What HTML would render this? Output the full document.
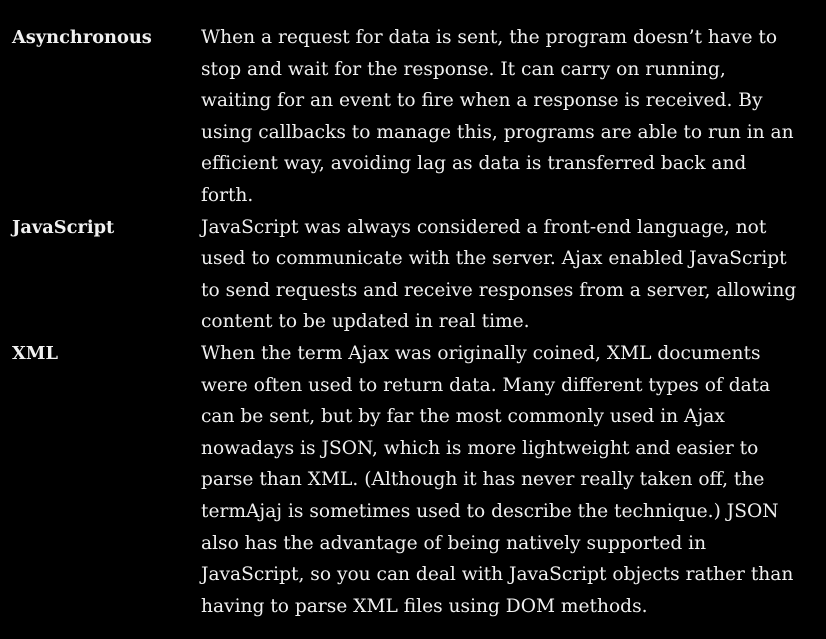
<!DOCTYPE html>
<html><head><meta charset="utf-8"><style>
html,body{margin:0;padding:0;background:#000;width:826px;height:639px;overflow:hidden}
body{font-family:"DejaVu Serif",serif;font-size:18.6px;line-height:31.6px;color:#f0f0f0}
.row{position:relative;white-space:nowrap}
.t{position:absolute;left:12px;top:0;font-weight:bold;font-size:17.8px}
.d{margin-left:201px}
.wrap{padding-top:22px}
</style></head><body><div class="wrap">
<div class="row"><div class="t">Asynchronous</div><div class="d">When a request for data is sent, the program doesn’t have to<br>stop and wait for the response. It can carry on running,<br>waiting for an event to fire when a response is received. By<br>using callbacks to manage this, programs are able to run in an<br>efficient way, avoiding lag as data is transferred back and<br>forth.</div></div>
<div class="row"><div class="t">JavaScript</div><div class="d">JavaScript was always considered a front-end language, not<br>used to communicate with the server. Ajax enabled JavaScript<br>to send requests and receive responses from a server, allowing<br>content to be updated in real time.</div></div>
<div class="row"><div class="t">XML</div><div class="d">When the term Ajax was originally coined, XML documents<br>were often used to return data. Many different types of data<br>can be sent, but by far the most commonly used in Ajax<br>nowadays is JSON, which is more lightweight and easier to<br>parse than XML. (Although it has never really taken off, the<br>termAjaj is sometimes used to describe the technique.) JSON<br>also has the advantage of being natively supported in<br>JavaScript, so you can deal with JavaScript objects rather than<br>having to parse XML files using DOM methods.</div></div>
</div></body></html>
